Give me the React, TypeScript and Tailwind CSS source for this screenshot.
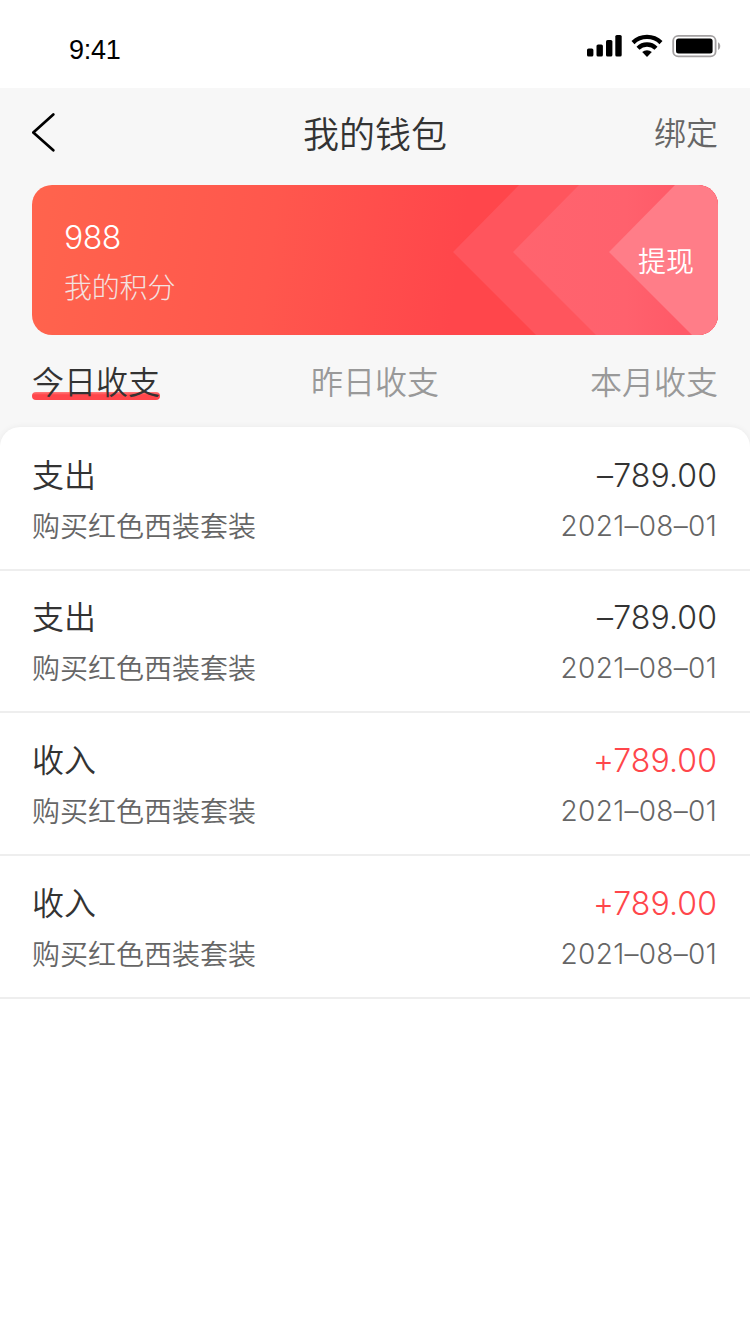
import React from "react";

interface IRecord {
  id: number;
  type: string;
  name: string;
  amount: string;
  date: string;
  income: boolean;
}

const records: Array<IRecord> = [
  { id: 1, type: "支出", name: "购买红色西装套装", amount: "–789.00", date: "2021–08–01", income: false },
  { id: 2, type: "支出", name: "购买红色西装套装", amount: "–789.00", date: "2021–08–01", income: false },
  { id: 3, type: "收入", name: "购买红色西装套装", amount: "+789.00", date: "2021–08–01", income: true },
  { id: 4, type: "收入", name: "购买红色西装套装", amount: "+789.00", date: "2021–08–01", income: true },
];

function StatusBar() {
  return (
    <div className="flex h-[88px] items-start justify-between bg-white pl-[69px] pr-[29px]">
      <p className="mt-[34px] font-['Liberation_Sans','Noto_Sans_CJK_SC',sans-serif] text-[27px] leading-[32px] tracking-[-0.3px] text-black">
        9:41
      </p>
      <svg className="mt-[33px]" width="134" height="26" viewBox="0 0 134 26">
        <rect x="0" y="15.5" width="6.4" height="8" rx="1.6" />
        <rect x="9.5" y="11.5" width="6.4" height="12" rx="1.6" />
        <rect x="19" y="7" width="6.4" height="16.5" rx="1.6" />
        <rect x="28.3" y="2" width="6.4" height="21.5" rx="1.6" />
        <g fill="none" stroke="#000" strokeWidth="4.3">
          <path d="M46 9.6a20.2 20.2 0 0 1 28 0" />
          <path d="M51 15.2a12.8 12.8 0 0 1 18 0" />
        </g>
        <path d="M60 23.9l-4.8-4.8a7.2 7.2 0 0 1 9.6 0z" />
        <rect x="86.2" y="2.8" width="42.4" height="20.6" rx="5" fill="none" stroke="#a3a0a1" strokeWidth="1.8" />
        <rect x="89" y="5.5" width="36.6" height="15" rx="2.5" />
        <path d="M131 9.2c3 1.4 3 6.4 0 7.8z" fill="#a3a0a1" />
      </svg>
    </div>
  );
}

function PointsCard() {
  return (
    <div className="relative mx-8 mt-[9px] flex h-[150px] items-center justify-between overflow-hidden rounded-[20px] bg-[linear-gradient(98deg,#ff644d_0%,#ff574d_35%,#ff464b_62%,#ff464b_100%)] pl-8 pr-[24px]">
      <svg className="absolute inset-0" width="686" height="150" viewBox="0 0 686 150">
        <defs>
          <linearGradient id="band" x1="0" x2="1">
            <stop offset="0" stopColor="#ff646e" />
            <stop offset="0.55" stopColor="#ff616d" />
            <stop offset="0.8" stopColor="#ff5a68" />
          </linearGradient>
        </defs>
        <path d="M421 67L487 0H686V150H504z" fill="#ff555d" />
        <path d="M481 67L547 0H686V150H564z" fill="url(#band)" />
        <path d="M577 67L643 0H686V150H660z" fill="#ff7d88" />
      </svg>
      <div className="relative">
        <p className="mt-[7px] text-[32px] font-light leading-[38px] tracking-[-0.5px] text-white">988</p>
        <p className="mt-[10px] text-[28px] font-light leading-[42px] tracking-[-0.2px] text-[#f3e2e0]">我的积分</p>
      </div>
      <p className="relative mt-[3px] text-[28px] leading-[42px] text-white">提现</p>
    </div>
  );
}

function App() {
  return (
    <div className="flex min-h-[1334px] w-[750px] flex-col bg-[#f7f7f7] font-['Inter','Noto_Sans_CJK_SC',sans-serif] font-[350] text-[#333]">
      <StatusBar />

      <div className="grid h-[88px] grid-cols-3 items-center px-8">
        <svg width="24" height="40" viewBox="0 0 24 40" fill="none" stroke="#000" strokeWidth="2.7" strokeLinecap="round" strokeLinejoin="round">
          <path d="M21.3 2.5L1.3 20.5L21.3 38.3" />
        </svg>
        <h1 className="mt-[6px] text-center text-[36px] font-[350] leading-[50px]">我的钱包</h1>
        <p className="mt-[4px] text-right text-[32px] leading-[48px] text-[#666]">绑定</p>
      </div>

      <PointsCard />

      <div className="flex h-[92px] justify-between px-8 pt-[24px] text-[32px] leading-[48px] text-[#999]">
        <div className="relative h-12 text-[#333]">
          <div className="absolute bottom-[7px] left-0 h-2 w-full rounded-full bg-linear-to-b from-[#ff7b7b] to-[#ff464b] to-35%" />
          <p className="relative">今日收支</p>
        </div>
        <p>昨日收支</p>
        <p>本月收支</p>
      </div>

      <div className="flex-1 rounded-t-[20px] bg-white shadow-[0_0_6px_rgba(0,0,0,0.06)]">
        {records.map((record) => (
          <div
            key={record.id}
            className="flex h-[143px] justify-between border-b-2 border-[#eee] px-8 pt-[24px] first:h-[144px] first:pt-[25px] nth-2:h-[142px] nth-2:pt-[23px]"
          >
            <div>
              <p className="text-[32px] leading-[48px]">{record.type}</p>
              <p className="mt-[6px] text-[28px] leading-[42px] text-[#666]">{record.name}</p>
            </div>
            <div className="pr-px text-right">
              <p
                className={
                  record.income
                    ? "text-[32px] leading-[48px] tracking-[0.1px] text-[#ff464b]"
                    : "text-[32px] leading-[48px] tracking-[0.1px]"
                }
              >
                {record.amount}
              </p>
              <p className="mt-[5px] text-[28px] font-light leading-[42px] tracking-[0.3px] text-[#666]">{record.date}</p>
            </div>
          </div>
        ))}
      </div>
    </div>
  );
}

export default App;
